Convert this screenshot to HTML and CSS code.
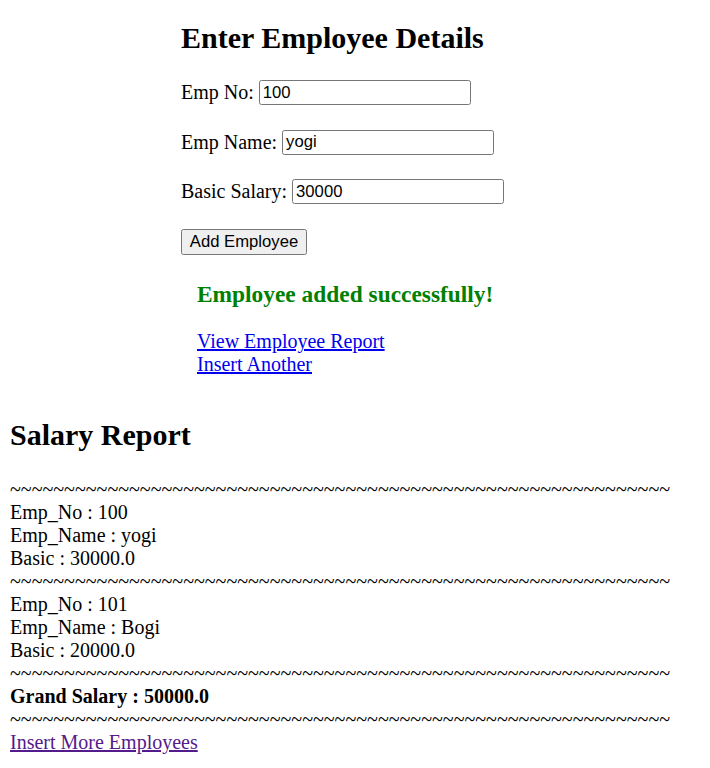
FILE: index.html
```html
<!DOCTYPE html>
<html>
<head>
<meta charset="utf-8">
<title>Employee</title>
<link rel="stylesheet" href="styles.css">
</head>
<body>
<section class="entry">
  <h2 class="title">Enter Employee Details</h2>
  <form class="emp-form">
    <div class="row"><label class="lbl">Emp No:</label><input class="field" type="text" value="100"></div>
    <div class="row"><label class="lbl">Emp Name:</label><input class="field" type="text" value="yogi"></div>
    <div class="row"><label class="lbl">Basic Salary:</label><input class="field" type="text" value="30000"></div>
    <div class="row"><button class="btn" type="button">Add Employee</button></div>
  </form>
  <div class="result">
    <h3 class="ok">Employee added successfully!</h3>
    <div class="links">
      <a class="lnk" href="#report">View Employee Report</a>
      <a class="lnk" href="#insert">Insert Another</a>
    </div>
  </div>
</section>
<section class="report">
  <h2 class="title report-title">Salary Report</h2>
  <div class="lines">
    <div class="sep">~~~~~~~~~~~~~~~~~~~~~~~~~~~~~~~~~~~~~~~~~~~~~~~~~~~~~~~~~~~~~</div>
    <div>Emp_No : 100</div>
    <div>Emp_Name : yogi</div>
    <div>Basic : 30000.0</div>
    <div class="sep">~~~~~~~~~~~~~~~~~~~~~~~~~~~~~~~~~~~~~~~~~~~~~~~~~~~~~~~~~~~~~</div>
    <div>Emp_No : 101</div>
    <div>Emp_Name : Bogi</div>
    <div>Basic : 20000.0</div>
    <div class="sep">~~~~~~~~~~~~~~~~~~~~~~~~~~~~~~~~~~~~~~~~~~~~~~~~~~~~~~~~~~~~~</div>
    <div class="total">Grand Salary : 50000.0</div>
    <div class="sep">~~~~~~~~~~~~~~~~~~~~~~~~~~~~~~~~~~~~~~~~~~~~~~~~~~~~~~~~~~~~~</div>
    <div><a class="lnk visited" href="#more">Insert More Employees</a></div>
  </div>
</section>
</body>
</html>
```
FILE: styles.css
```css
html, body {
  background: #ffffff;
}
body {
  margin: 0;
  padding: 0 10px;
  font-family: "Liberation Serif", "Times New Roman", serif;
  font-size: 20px;
  line-height: 23px;
  color: #000000;
}
.entry {
  padding-left: 171px;
}
.title {
  font-size: 30px;
  line-height: 34.5px;
  font-weight: bold;
  margin: 21px 0 24.5px 0;
}
.emp-form {
  margin: 0;
}
.row {
  display: flex;
  align-items: center;
  gap: 5px;
  height: 25px;
  margin-bottom: 24.5px;
}
.row:last-child {
  height: 26px;
  margin-bottom: 0;
}
.lbl {
  line-height: 23px;
  white-space: nowrap;
}
.field {
  box-sizing: border-box;
  width: 212px;
  height: 25px;
  margin: 0;
  padding: 1px 3px;
  border: 1px solid #767676;
  border-radius: 2.5px;
  font-family: "Liberation Sans", Arial, sans-serif;
  font-size: 16.67px;
  color: #000000;
  background: #ffffff;
}
.btn {
  box-sizing: border-box;
  width: 126px;
  height: 26px;
  margin: 0;
  padding: 0 7px;
  border: 1px solid #767676;
  border-radius: 2.5px;
  background: #efefef;
  font-family: "Liberation Sans", Arial, sans-serif;
  font-size: 16.67px;
  color: #000000;
}
.result {
  padding-left: 16px;
  margin-top: 26px;
}
.ok {
  font-size: 23.4px;
  line-height: 26.9px;
  font-weight: bold;
  color: #008000;
  margin: 0 0 22.5px 0;
}
.links {
  display: flex;
  flex-direction: column;
  align-items: flex-start;
}
.lnk {
  color: #0000ee;
  text-decoration: underline;
}
.lnk.visited {
  color: #551a8b;
}
.report {
  margin-top: 41.8px;
}
.report-title {
  margin: 0 0 25.7px 0;
}
.sep {
  white-space: nowrap;
}
.total {
  font-weight: bold;
}
```
